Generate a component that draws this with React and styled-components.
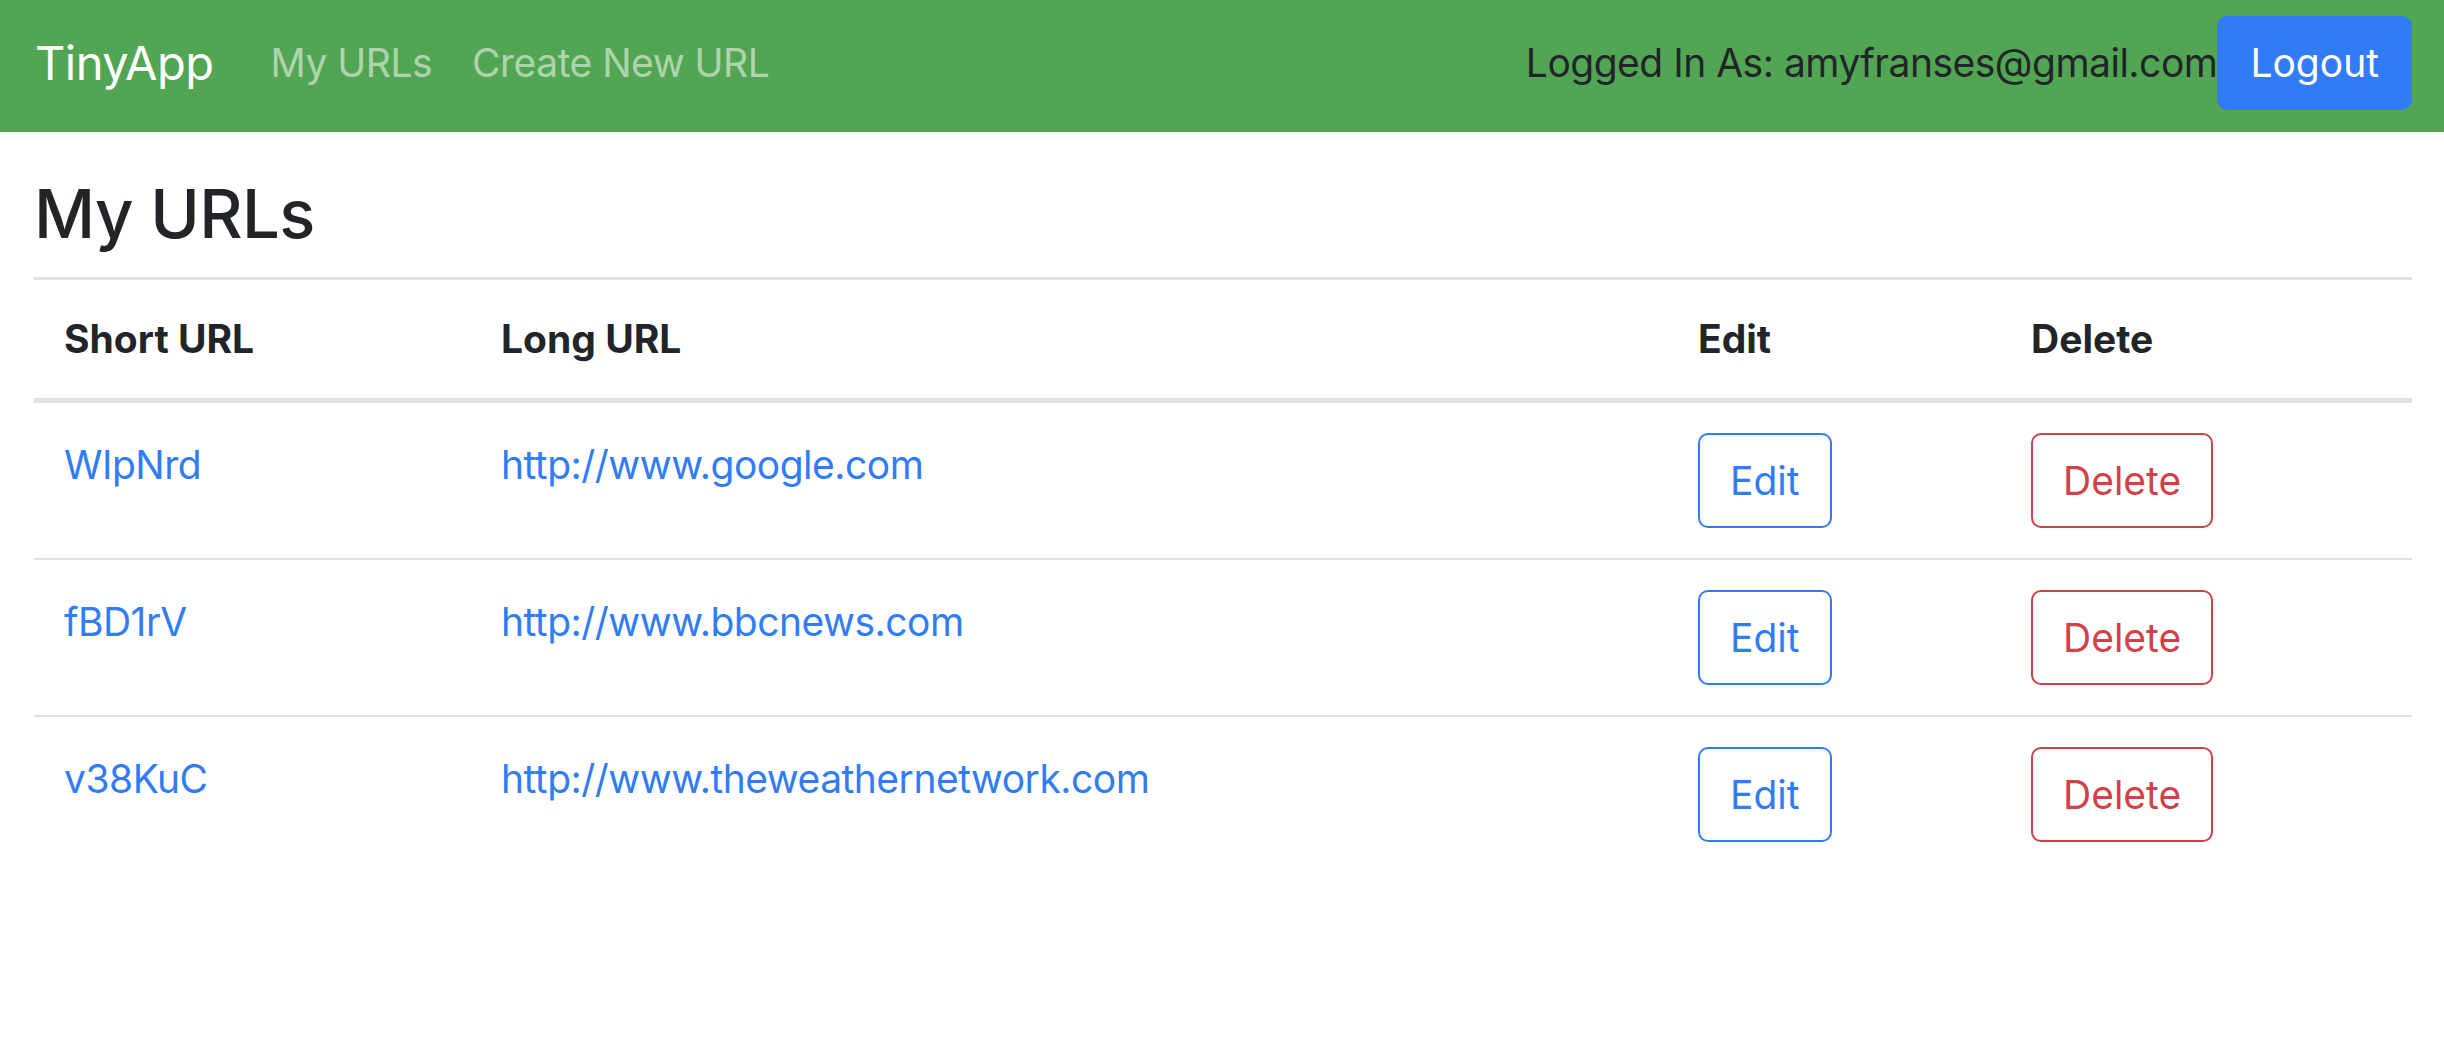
import React from "react";
import styled, { createGlobalStyle } from "styled-components";

const GlobalStyle = createGlobalStyle`
  html, body {
    margin: 0;
    padding: 0;
    background: #ffffff;
  }
  body {
    font-family: Inter, "Noto Sans", "Liberation Sans", sans-serif;
    font-size: 39px;
    line-height: 1.5;
    letter-spacing: -0.5px;
    color: #212529;
  }
`;

const urls = [
  { id: "WIpNrd", longURL: "http://www.google.com" },
  { id: "fBD1rV", longURL: "http://www.bbcnews.com" },
  { id: "v38KuC", longURL: "http://www.theweathernetwork.com" },
];

const App = () => {
  return (
    <>
      <GlobalStyle />
      <Navbar>
        <Brand href="#">TinyApp</Brand>
        <NavLinks>
          <NavLink href="#">My URLs</NavLink>
          <NavLink href="#">Create New URL</NavLink>
        </NavLinks>
        <UserText>Logged In As: amyfranses@gmail.com</UserText>
        <LogoutButton>Logout</LogoutButton>
      </Navbar>

      <Main>
        <Title>My URLs</Title>
        <Table>
          <thead>
            <tr>
              {/* widths are content widths, the 60px of padding comes on top */}
              <HeadCell $width="377px">Short URL</HeadCell>
              <HeadCell $width="1137px">Long URL</HeadCell>
              <HeadCell $width="273px">Edit</HeadCell>
              <HeadCell>Delete</HeadCell>
            </tr>
          </thead>
          <tbody>
            {urls.map((url, i) => (
              <Row key={url.id} $last={i === urls.length - 1}>
                <Cell>
                  <TableLink href="#">{url.id}</TableLink>
                </Cell>
                <Cell>
                  <TableLink href="#">{url.longURL}</TableLink>
                </Cell>
                <Cell>
                  <OutlineButton $color="#317cf6">Edit</OutlineButton>
                </Cell>
                <Cell>
                  <OutlineButton $color="#d0424a">Delete</OutlineButton>
                </Cell>
              </Row>
            ))}
          </tbody>
        </Table>
      </Main>
    </>
  );
};

const Navbar = styled.nav`
  display: flex;
  align-items: center;
  box-sizing: border-box;
  height: 132px;
  padding: 0 32px 6px 35px;
  background: #52a552;
`;

const Brand = styled.a`
  font-size: 47px;
  line-height: 1.5;
  color: #ffffff;
  text-decoration: none;
  margin-right: 37px;
`;

const NavLinks = styled.div`
  display: flex;
  flex: 1;
`;

const NavLink = styled.a`
  color: rgba(255, 255, 255, 0.55);
  text-decoration: none;
  padding: 0 20px;
`;

const UserText = styled.span`
  color: #212529;
`;

const LogoutButton = styled.button`
  font: inherit;
  color: #ffffff;
  background: #317cf6;
  border: 2px solid #317cf6;
  border-radius: 10px;
  height: 94px;
  padding: 0 31px;
`;

const Main = styled.main`
  padding: 40px 32px 0 34px;
`;

const Title = styled.h1`
  font-size: 67px;
  font-weight: 500;
  line-height: 1.25;
  letter-spacing: -0.6px;
  margin: 0 0 21px;
`;

const Table = styled.table`
  width: 100%;
  table-layout: fixed;
  border-collapse: collapse;
`;

const HeadCell = styled.th`
  width: ${(p) => p.$width || "auto"};
  text-align: left;
  font-weight: 700;
  letter-spacing: 0;
  padding: 30px 30px;
  border-top: 3px solid #dee2e6;
  border-bottom: 5px solid #dee2e6;
`;

const Row = styled.tr`
  border-bottom: ${(p) => (p.$last ? "none" : "2px solid #dee2e6")};
`;

const Cell = styled.td`
  vertical-align: top;
  padding: 30px 30px;
  line-height: 64px;
`;

const TableLink = styled.a`
  color: #317cf6;
  text-decoration: none;
`;

const OutlineButton = styled.button`
  font: inherit;
  line-height: 1.5;
  color: ${(p) => p.$color};
  background: transparent;
  border: 2px solid ${(p) => p.$color};
  border-radius: 10px;
  height: 95px;
  padding: 0 30px;
`;

export default App;
